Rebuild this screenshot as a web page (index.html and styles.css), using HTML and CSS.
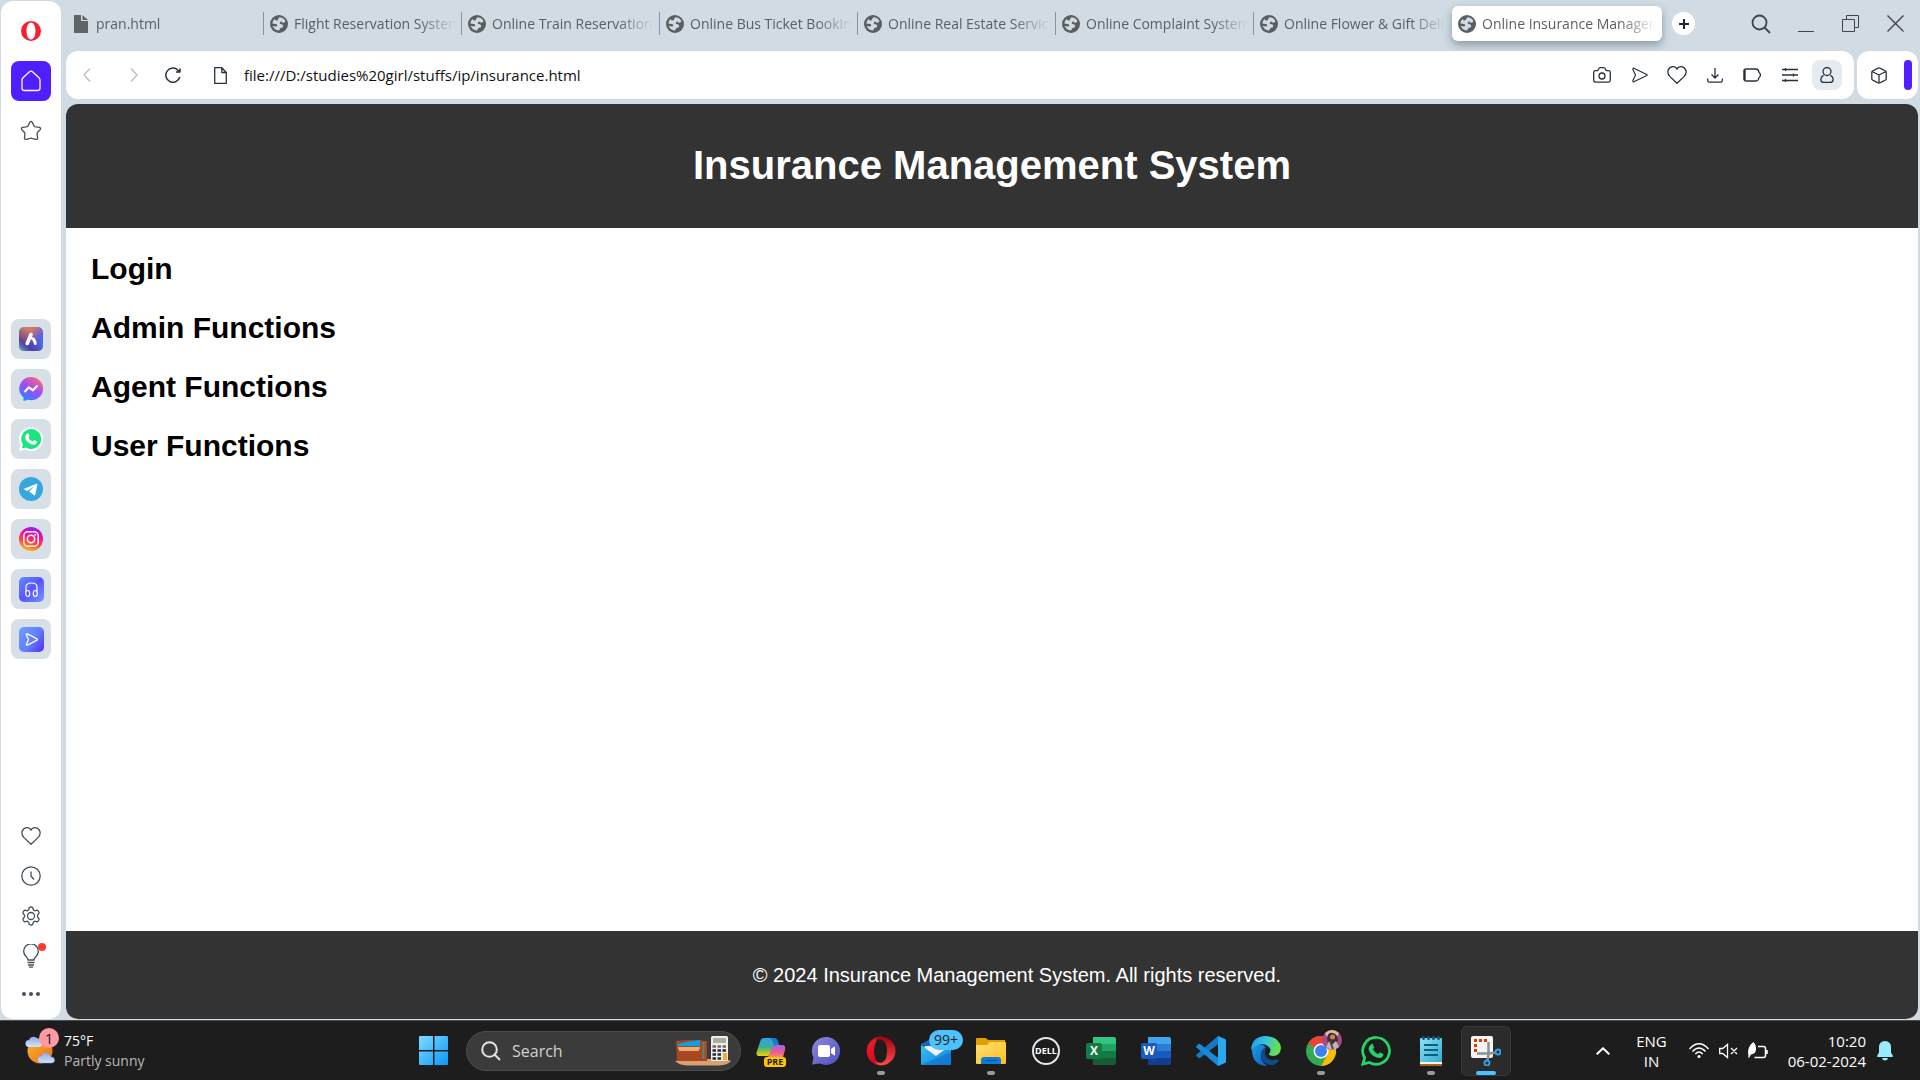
FILE: index.html
```html
<!DOCTYPE html>
<html lang="en">
<head>
<meta charset="utf-8">
<meta name="viewport" content="width=device-width, initial-scale=1">
<title>Online Insurance Management System</title>
<link rel="stylesheet" href="styles.css">
</head>
<body>
<svg class="sprite" aria-hidden="true">
  <defs>
    <linearGradient id="g-aria" x1="0" y1="0" x2="1" y2="1"><stop offset="0" stop-color="#c98a7c"/><stop offset=".3" stop-color="#d8795c"/><stop offset=".65" stop-color="#5560e8"/><stop offset="1" stop-color="#4a7cff"/></linearGradient>
    <linearGradient id="g-ariab" x1="0" y1="1" x2=".6" y2=".3"><stop offset="0" stop-color="#5bb8e0"/><stop offset=".4" stop-color="#4a3596" stop-opacity=".8"/><stop offset="1" stop-color="#4a3596" stop-opacity="0"/></linearGradient>
    <linearGradient id="g-msg" x1=".2" y1="1" x2=".8" y2="0"><stop offset="0" stop-color="#1a8dff"/><stop offset=".5" stop-color="#a04aff"/><stop offset="1" stop-color="#ff6a70"/></linearGradient>
    <linearGradient id="g-insta" x1=".3" y1="1" x2=".6" y2="0"><stop offset="0" stop-color="#ffc21a"/><stop offset=".35" stop-color="#ff4a3c"/><stop offset=".65" stop-color="#f50f9c"/><stop offset="1" stop-color="#9a18ff"/></linearGradient>
    <linearGradient id="g-blue" x1="0" y1="0" x2="1" y2="1"><stop offset="0" stop-color="#5e8cff"/><stop offset=".5" stop-color="#5a55ff"/><stop offset="1" stop-color="#7298ff"/></linearGradient>
    <linearGradient id="g-blue2" x1="0" y1=".3" x2="1" y2="1"><stop offset="0" stop-color="#6f95ff"/><stop offset=".5" stop-color="#5f7dff"/><stop offset="1" stop-color="#5526ff"/></linearGradient>
    <linearGradient id="g-win" x1="0" y1="0" x2="1" y2="1"><stop offset="0" stop-color="#7fdcff"/><stop offset="1" stop-color="#0a97ff"/></linearGradient>
    <linearGradient id="g-copa" x1="0" y1="0" x2="0" y2="1"><stop offset="0" stop-color="#2fa0f5"/><stop offset=".5" stop-color="#35b38c"/><stop offset="1" stop-color="#f5d000"/></linearGradient>
    <linearGradient id="g-copb" x1="0" y1="0" x2="0" y2="1"><stop offset="0" stop-color="#a066ea"/><stop offset=".6" stop-color="#ee5b97"/><stop offset="1" stop-color="#ff8a5c"/></linearGradient>
    <linearGradient id="g-chat" x1="0" y1="0" x2="1" y2="1"><stop offset="0" stop-color="#8f88d8"/><stop offset="1" stop-color="#4b50c4"/></linearGradient>
    <linearGradient id="g-opera" x1="0" y1="0" x2="1" y2="1"><stop offset="0" stop-color="#ff1b2d"/><stop offset="1" stop-color="#b00018"/></linearGradient>
    <linearGradient id="g-operab" x1="0" y1="0" x2="0" y2="1"><stop offset="0" stop-color="#a3000f"/><stop offset="1" stop-color="#ff4b4b"/></linearGradient>
    <linearGradient id="g-mail" x1="0" y1="0" x2="1" y2="1"><stop offset="0" stop-color="#35c0f5"/><stop offset="1" stop-color="#0f7fdc"/></linearGradient>
    <linearGradient id="g-fold" x1="0" y1="0" x2="1" y2="1"><stop offset="0" stop-color="#ffe07a"/><stop offset="1" stop-color="#ffbd1c"/></linearGradient>
    <linearGradient id="g-edge" x1="0" y1="0" x2="1" y2=".2"><stop offset="0" stop-color="#1e9de0"/><stop offset=".5" stop-color="#35c1e6"/><stop offset="1" stop-color="#68e04a"/></linearGradient>
    <linearGradient id="g-edgeb" x1="0" y1="0" x2="1" y2="1"><stop offset="0" stop-color="#1b9de2"/><stop offset="1" stop-color="#0a5fc2"/></linearGradient>
    <linearGradient id="g-note" x1="0" y1="0" x2="1" y2="1"><stop offset="0" stop-color="#8fe2f5"/><stop offset="1" stop-color="#35a9cc"/></linearGradient>
    <linearGradient id="g-sun" x1="0" y1="0" x2="1" y2="1"><stop offset="0" stop-color="#f8b832"/><stop offset="1" stop-color="#ee6a12"/></linearGradient>
    <linearGradient id="g-cloud" x1="0" y1="0" x2="0" y2="1"><stop offset="0" stop-color="#8ea8e6"/><stop offset="1" stop-color="#d4e4fb"/></linearGradient>
    <symbol id="globe" viewBox="0 0 18 18"><circle cx="9" cy="9" r="9" fill="#5b5f60"/><path class="globe-land" d="M10 2.300q4 .3 5.500 4.200-1.300 1.500-3 1-1 0-1.300-1.300-1.700.8-1.500 2 .3 1 2 1 1.700.300 1.500 2-.3 1.500-2 1.500-1.200.300-1.400 1.500-.3 1.300-2 1.200Q4 14.500 2.500 11l3.200.5q1.500 0 1.500-1.200T5.700 9L2.300 8.500Q2.500 6 4.500 4q1 1.800 2.200 1.500 1.500-.2 1.600-1.700Q8.700 2.500 10 2.300Z"/></symbol>
    <symbol id="heart" viewBox="0 0 20 20"><path d="M10 18.200 3 11.600C-1.500 7 2 1.600 6 1.600c2 0 3.400 1 4 2.600.6-1.600 2-2.600 4-2.600 4 0 7.500 5.400 3 10Z"/></symbol>
    <symbol id="send" viewBox="0 0 20 20"><path d="M3.200 2.600c-.8-.4-1.400.2-1.200 1l3 6.400-3 6.400c-.2.8.4 1.400 1.200 1L17.500 10.600q1-.6 0-1.200Z"/></symbol>
    <symbol id="opera-ring" viewBox="0 0 20 20"><path fill="#fa1e33" fill-rule="evenodd" d="M10 0a10 10 0 1 0 0 20 10 10 0 0 0 0-20Zm0 1.600c2.800 0 4.500 3.700 4.500 8.400s-1.700 8.400-4.500 8.400-4.500-3.700-4.500-8.400S7.200 1.600 10 1.600Z"/></symbol>
    <symbol id="phone" viewBox="0 0 24 24"><path d="M8.300 6.500c.5-.4 1-.3 1.300.3l.8 1.900c.2.500 0 .9-.9 1.900.9 1.800 2.200 3 4.200 3.900.9-1.100 1.300-1.500 1.800-1.300l2 1c.6.300.5.9.2 1.500-.9 2-3 2.200-5 1.500-3.500-1.200-5.500-3.500-6.400-5.800-.6-1.700.2-3.900 2-4.900Z"/></symbol>
  </defs>
</svg>

<div class="browser">
  <nav class="sidebar" aria-label="Sidebar">
    <button class="side-btn" aria-label="Menu"><svg width="20" height="20"><use href="#opera-ring"/></svg></button>
    <button class="side-btn home" aria-label="Home"><svg class="line" width="20" height="22" viewBox="0 0 20 22"><path d="m8.500 1.700-6 5.500Q1 8.500 1 10v8q0 2.500 2.500 2.500h13Q19 20.500 19 18v-8q0-1.500-1.500-2.800l-6-5.500q-1.500-1.200-3 0Z"/></svg></button>
    <button class="side-btn" aria-label="Bookmarks"><svg class="line" width="22" height="22" viewBox="0 0 22 22"><path d="M9.800 2.200q1.200-1.400 2.400 0l1.600 3.400q.6 1 1.700 1.200l4 .6q1.700.6.700 2.200l-2.500 2.700q-.8.900-.6 2l.5 3.800q-.2 1.800-2 1.200L12 18.400q-1-.4-2 0l-3.600.9q-1.800.6-2-1.200l.5-3.800q.2-1.100-.6-2L1.800 9.600q-1-1.600.7-2.200l4-.6q1.100-.2 1.700-1.200Z"/></svg></button>
    <div class="apps">
      <button class="app" aria-label="Aria"><svg width="24" height="24" viewBox="0 0 24 24"><rect width="24" height="24" rx="5" fill="url(#g-aria)"/><rect width="24" height="24" rx="5" fill="url(#g-ariab)"/><path d="M12 7.500 8.200 16.500" stroke="#fff" stroke-width="3.600" stroke-linecap="round"/><path d="M13.500 11.500q2.500 1.500 2.700 5" stroke="#fff" stroke-width="3" stroke-linecap="round" fill="none"/></svg></button>
      <button class="app" aria-label="Messenger"><svg width="24" height="24" viewBox="0 0 24 24"><path fill="url(#g-msg)" d="M12 0a12 11.600 0 1 1-3 22.800L4.500 24v-3.500A11.600 11.600 0 0 1 12 0Z"/><path d="m5.500 15 4.400-4.700 4.100 3 4.500-4.800" stroke="#fff" stroke-width="2.200" fill="none" stroke-linejoin="round"/></svg></button>
      <button class="app" aria-label="WhatsApp"><svg width="24" height="24" viewBox="0 0 24 24"><path fill="#fff" d="M12 0a12 12 0 1 1-5.500 22.600L0 24l1.500-6A12 12 0 0 1 12 0Z"/><path fill="#1be481" d="M12 2a10 10 0 1 1-5 18.600L2.800 21.500 4 17.600A10 10 0 0 1 12 2Z"/><use href="#phone" fill="#fff"/></svg></button>
      <button class="app" aria-label="Telegram"><svg width="24" height="24" viewBox="0 0 24 24"><circle cx="12" cy="12" r="12" fill="#37a7e0"/><path fill="#fff" d="m4.500 12 13-5.200c.7-.2 1 .1.900.9l-2.200 10c-.2.7-.6.900-1.200.5l-4.900-3.700 5-5-7 4.400Z"/></svg></button>
      <button class="app" aria-label="Instagram"><svg width="24" height="24" viewBox="0 0 24 24"><circle cx="12" cy="12" r="12" fill="url(#g-insta)"/><g fill="none" stroke="#fff" stroke-width="1.500"><rect x="4.800" y="4.800" width="14.400" height="14.400" rx="4"/><circle cx="12" cy="12" r="3.700"/></g><circle cx="16.200" cy="7.800" r="1" fill="#fff"/></svg></button>
      <button class="app" aria-label="Player"><svg width="25" height="25" viewBox="0 0 25 25"><rect width="25" height="25" rx="5" fill="url(#g-blue)"/><g fill="none" stroke="#fff" stroke-width="1.200"><path d="M7 14.500V10q0-4 5.500-4T18 10v4.500"/><ellipse cx="8.700" cy="16.500" rx="2" ry="3"/><ellipse cx="16.300" cy="16.500" rx="2" ry="3"/></g></svg></button>
      <button class="app" aria-label="Flow"><svg width="25" height="25" viewBox="0 0 25 25"><rect width="25" height="25" rx="5" fill="url(#g-blue2)"/><path fill="none" stroke="#fff" stroke-width="1.300" stroke-linejoin="round" d="M8.500 6.900q-1.700-.5-1 1.200l2 4.400-2 4.400q-.7 1.700 1 1.200l9.500-5q.8-.6 0-1.200Z"/></svg></button>
    </div>
    <div class="side-tools">
      <button class="side-tool" aria-label="Pinboards"><svg class="line" width="20" height="20"><use href="#heart"/></svg></button>
      <button class="side-tool" aria-label="History"><svg class="line" width="20" height="20" viewBox="0 0 20 20"><circle cx="10" cy="10" r="9.200"/><path d="M10 5.500V10l3 3.500"/></svg></button>
      <button class="side-tool" aria-label="Settings"><svg class="line" width="20" height="20" viewBox="0 0 20 20"><circle cx="10" cy="10" r="3.500"/><path d="M8.300 1.500q1.700-1 3.400 0l.6 2.400 1.500.9 2.400-.7q1.700.900 1.900 2.900l-1.600 2.100v1.800l1.600 2.100q-.2 2-1.900 2.900l-2.400-.7-1.500.9-.6 2.400q-1.700 1-3.400 0l-.6-2.400-1.500-.9-2.400.7Q2.100 15 1.900 13l1.600-2.100V9.100L1.900 7Q2.100 5 3.800 4.100l2.400.7 1.500-.9Z"/></svg></button>
      <button class="side-tool" aria-label="Tips"><svg class="line" width="20" height="24" viewBox="0 0 20 24"><path d="M7 16q0-1.500-1.500-3a7.300 7.300 0 1 1 9 0Q13 14.500 13 16ZM6.500 18.500h7M7 21h6M8 23.200h4"/></svg><span class="dot"></span></button>
      <button class="side-tool" aria-label="More"><svg width="18" height="4" viewBox="0 0 18 4" fill="#45505a"><circle cx="2" cy="2" r="2"/><circle cx="9" cy="2" r="2"/><circle cx="16" cy="2" r="2"/></svg></button>
    </div>
  </nav>

  <div class="window">
    <div class="tabstrip">
      <div class="tabs">
        <button class="tab"><svg width="18" height="18" viewBox="0 0 18 18" fill="#5f6566"><path d="M2 0h7v6h7v12H2ZM10.500 0 16 5h-5.500Z"/></svg><span>pran.html</span></button>
        <button class="tab"><svg width="18" height="18"><use href="#globe"/></svg><span>Flight Reservation System</span></button>
        <button class="tab"><svg width="18" height="18"><use href="#globe"/></svg><span>Online Train Reservation</span></button>
        <button class="tab"><svg width="18" height="18"><use href="#globe"/></svg><span>Online Bus Ticket Booking</span></button>
        <button class="tab"><svg width="18" height="18"><use href="#globe"/></svg><span>Online Real Estate Services</span></button>
        <button class="tab"><svg width="18" height="18"><use href="#globe"/></svg><span>Online Complaint System</span></button>
        <button class="tab"><svg width="18" height="18"><use href="#globe"/></svg><span>Online Flower &amp; Gift Delivery</span></button>
        <button class="tab active"><svg width="18" height="18"><use href="#globe"/></svg><span>Online Insurance Management</span></button>
        <button class="new-tab" aria-label="New tab"><svg width="10" height="10" viewBox="0 0 10 10"><path d="M5 0v10M0 5h10" stroke="#1c2733" stroke-width="2"/></svg></button>
      </div>
      <div class="controls">
        <button aria-label="Search tabs"><svg class="ctl" width="20" height="20" viewBox="0 0 20 20"><circle cx="8.500" cy="8.500" r="7" stroke-width="1.800"/><path d="m13.500 13.500 5.500 5.500" stroke-width="1.800"/></svg></button>
        <button aria-label="Minimize"><svg class="ctl" width="16" height="16" viewBox="0 0 16 16"><path d="M0 15.500h16"/></svg></button>
        <button aria-label="Restore"><svg class="ctl" width="17" height="17" viewBox="0 0 17 17"><path d="M.5 4.500h12v12H.5ZM4.500 4.500v-4h12v12h-4"/></svg></button>
        <button aria-label="Close"><svg class="ctl" width="17" height="17" viewBox="0 0 17 17"><path d="m.5.5 16 16m0-16-16 16" stroke-width="1.400"/></svg></button>
      </div>
    </div>

    <div class="toolbar">
      <div class="address">
        <button class="nav faded" aria-label="Back"><svg class="line" width="14" height="14" viewBox="0 0 14 14"><path d="M10 .5 4 7l6 6.500"/></svg></button>
        <button class="nav faded" aria-label="Forward"><svg class="line" width="14" height="14" viewBox="0 0 14 14"><path d="m4 .5 6 6.500-6 6.500"/></svg></button>
        <button class="nav" aria-label="Reload"><svg class="line" width="16" height="16" viewBox="0 0 16 16"><path d="M14.800 10A7.100 7.100 0 1 1 13 3.200l1.500 1.500M15 1.500V5h-4" stroke-width="1.500"/></svg></button>
        <svg class="line page-icon" width="13" height="17" viewBox="0 0 13 17"><path d="M.7.700h7.100l4.500 4.800v10.800H.7ZM7.800.7v4.800h4.500"/></svg>
        <input class="url" type="text" aria-label="Address" value="file:///D:/studies%20girl/stuffs/ip/insurance.html">
        <div class="actions">
          <button aria-label="Snapshot"><svg class="line" width="18" height="18" viewBox="0 0 18 18"><path d="M.7 6.500q0-1.800 1.800-1.800h1.700q.8 0 1-.8.500-2.200 2-2.200h3.600q1.500 0 2 2.200.2.800 1 .8h1.700q1.800 0 1.800 1.800v7.800q0 1.800-1.800 1.800h-13Q.7 16.100.7 14.300Z"/><circle cx="9" cy="10" r="3"/></svg></button>
          <button aria-label="My Flow"><svg class="line" width="18" height="18"><use href="#send"/></svg></button>
          <button aria-label="Add to bookmarks"><svg class="line" width="20" height="20"><use href="#heart"/></svg></button>
          <button aria-label="Downloads"><svg class="line" width="16" height="16" viewBox="0 0 16 16"><path d="M8 1v10M4.500 7.500 8 11l3.500-3.500M.7 11.500v2q0 1.700 1.700 1.700h11.200q1.700 0 1.700-1.700v-2"/></svg></button>
          <button aria-label="Battery saver"><svg class="line" width="18" height="14" viewBox="0 0 18 14"><path d="M3 1h10q2.500 0 3 3.500 1.500 1 1.500 2.500T16 9.500Q15.500 13 13 13H3Q1 13 1 11V3q0-2 2-2Z"/><path d="M1.700 2v10" stroke-width="2"/></svg></button>
          <button aria-label="Easy setup"><svg class="line" width="16" height="14" viewBox="0 0 16 14"><path d="M0 1.500h16M0 7h16M0 12.500h16M3.500 0v3M11.500 5.500v3M3.500 11v3"/></svg></button>
          <button class="profile" aria-label="Profile"><svg class="line" width="16" height="16" viewBox="0 0 16 16"><circle cx="8" cy="4.500" r="4"/><path d="M4.500 8.300Q2 9.500 1.800 12.500q0 3 3 3h6.400q3 0 3-3Q14 9.500 11.500 8.300"/></svg></button>
        </div>
      </div>
      <div class="extras">
        <button aria-label="Extensions"><svg class="line" width="16" height="17" viewBox="0 0 16 17"><path d="M8 .8q.5 0 6.500 3.200.7.500.7 1.200v6.600q0 .7-.7 1.200Q8.500 16.200 8 16.200T1.500 13q-.7-.5-.7-1.200V5.200q0-.7.7-1.200Q7.500.8 8 .8ZM1 4.500 8 8l7-3.500M8 8v8"/></svg></button>
        <span class="accent"></span>
      </div>
    </div>

    <div class="page">
      <header class="page-header"><h1>Insurance Management System</h1></header>
      <main class="page-main">
        <h2>Login</h2>
        <h2>Admin Functions</h2>
        <h2>Agent Functions</h2>
        <h2>User Functions</h2>
      </main>
      <footer class="page-footer"><p>© 2024 Insurance Management System. All rights reserved.</p></footer>
    </div>
  </div>
</div>

<div class="taskbar">
  <button class="weather">
    <span class="weather-icon"><svg width="30" height="30" viewBox="0 0 30 30"><circle cx="15" cy="15" r="12.500" fill="url(#g-sun)"/><path fill="url(#g-cloud)" d="M4 11a3.500 3.500 0 0 1 0-7Q6 0 10 1q4 1 4 4a3 3 0 0 1 0 6Z"/><path fill="url(#g-cloud)" stroke="#7d9be0" stroke-width=".5" d="M16 27a3.500 3.500 0 0 1 0-7Q18 16 22 17q3 1 4 4a3 3 0 0 1 1 6Z"/></svg><span class="count">1</span></span>
    <span class="weather-text"><span>75°F</span><span class="muted">Partly sunny</span></span>
  </button>

  <div class="task-center">
    <button class="task" aria-label="Start"><svg width="30" height="30" viewBox="0 0 30 30"><path fill="url(#g-win)" d="M1 0h13v14H0V1Q0 0 1 0ZM15.500 0H28q1 0 1 1v13H15.500ZM0 15.500h14v13.500H1q-1 0-1-1ZM15.500 15.500H29V28q0 1-1 1H15.500Z"/></svg></button>
    <label class="search">
      <svg width="20" height="20" viewBox="0 0 20 20" fill="none" stroke="#e4e4e4" stroke-width="2"><circle cx="8.500" cy="8.500" r="7.300"/><path d="m13.500 13.500 5 5" stroke-linecap="round"/></svg>
      <input type="text" placeholder="Search" aria-label="Search">
      <svg width="57" height="30" viewBox="0 0 57 30"><path fill="#d9a074" d="M0 25q16-2 34-2 20 0 22 2-3 4-12 4.500H12Q4 29 0 25Z"/><path fill="#a94720" d="M1 5q16-2 31 0v20H2Z"/><path fill="#0ba0ea" d="m2 8 10-2 13-2v6H3Z"/><path stroke="#e7ae78" stroke-width="2" d="M3 12h22M4 14h20"/><path stroke="#4c8a79" stroke-width="2" d="M28.500 6v17"/><rect x="36" y="0" width="17" height="25" rx="1.500" fill="#f2efe8"/><path fill="#a9aea0" d="M38 2h13v5H38Z"/><g stroke="#262a33" stroke-width="2.500" stroke-dasharray="3.500 1.500"><path d="M37.500 10.500H52" stroke="#755f70"/><path d="M37.500 14.500H52M37.500 18.500H47M37.500 22.500H47"/></g><path fill="#f0ad38" d="M48 17h4v7h-4Z"/></svg>
    </label>
    <button class="task" aria-label="Copilot"><svg width="30" height="30" viewBox="0 0 30 30"><path fill="url(#g-copa)" d="M8 2h10q3 0 4 4l1 3h-5l-3 8q-1 3-4 3H4q-5 0-3-5L4 6q1-4 4-4Z"/><path fill="url(#g-copb)" d="M20 9h6q4 0 3 5l-2 7H12l4-9q1-3 4-3Z"/><path fill="#1579d4" d="M14 2h5q2 0 3 4l1 3h-5q-1-5-4-7Z"/></svg><span class="pre">PRE</span></button>
    <button class="task" aria-label="Chat"><svg width="30" height="30" viewBox="0 0 30 30"><path fill="url(#g-chat)" d="M15 1a14 14 0 1 1-6 26.600L1 28.500l1.500-6.800A14 14 0 0 1 15 1Z"/><rect x="7" y="9" width="12" height="12" rx="2" fill="#fff"/><path fill="#fff" d="m20 13 3.500-2.500q.5 0 .5.500v8q0 .5-.5.500L20 17Z"/></svg></button>
    <button class="task running" aria-label="Opera"><svg width="30" height="30" viewBox="0 0 30 30"><path fill="url(#g-opera)" fill-rule="evenodd" d="M15 .5a14.500 14.500 0 1 0 9 26 14.500 14.500 0 0 1-9 2Q9 28 8 15 9 2 15 2Z"/><path fill="url(#g-operab)" d="M15 .7a14.500 14.300 0 0 1 0 28.600q-4 0-6-4 8 4 11-3 2-7 0-14-3-7-11-4 2-3.600 6-3.600Z"/><ellipse cx="14.500" cy="15" rx="5.700" ry="11" fill="#1d1d1d"/></svg></button>
    <button class="task" aria-label="Mail"><svg width="30" height="30" viewBox="0 0 30 30"><path fill="#1466b8" d="M0 8 15 0l15 8v8H0Z"/><path fill="#f1f1f1" d="M4 10h22v5l-11 8L3 12Z"/><path fill="url(#g-mail)" d="m0 9 15 11L30 9v20H0Z"/><path fill="#0d67c5" opacity=".5" d="m0 29 30-13v13Z"/></svg><span class="badge">99+</span></button>
    <button class="task running" aria-label="File Explorer"><svg width="30" height="30" viewBox="0 0 30 30"><path fill="#dfa000" d="M1 2h8q2 0 3 2h17v10H0V3q0-1 1-1Z"/><path fill="url(#g-fold)" d="M0 9h11l3-3h15q1 0 1 1v20q0 1-1 1H1q-1 0-1-1Z"/><path fill="#0f7ad1" d="M8 21h14q3 0 3 3v4H5v-4q0-3 3-3Z"/><path stroke="#0754a0" d="M9 24.500h12"/></svg></button>
    <button class="task dell" aria-label="Dell"><span>DELL</span></button>
    <button class="task" aria-label="Excel"><span class="office excel"><b>X</b></span></button>
    <button class="task" aria-label="Word"><span class="office word"><b>W</b></span></button>
    <button class="task" aria-label="Visual Studio Code"><svg width="30" height="30" viewBox="0 0 30 30"><path fill="#1579c0" d="m22 0 3 6L4 22q-1 .5-1.500 0l-2-2q-.5-1 0-1.500Z"/><path fill="#1b8ad6" d="m22 30 3-6L4 8q-1-.5-1.500 0l-2 2q-.5 1 0 1.500Z"/><path fill="#2aa9f2" d="m22 0 7 3q1 .5 1 1.500v21q0 1-1 1.500l-7 3Z"/></svg></button>
    <button class="task" aria-label="Edge"><svg width="30" height="30" viewBox="0 0 30 30"><path fill="url(#g-edgeb)" d="M1 11Q0 30 17 30 9 26 10 18q1-5 5-7Q8 5 1 11Z"/><path fill="#0c4c94" d="M10 17q0 12 12 12 4-1 6-5-1-1-5 0-7 1-9-6-.5-4 1.500-6.500-5 1-5.500 5.500Z"/><path fill="url(#g-edge)" d="M0 14Q1 0 15 0q14 1 15 12-1 8-8 8-5-.5-4-2 3-4 0-7Q10 4 0 14Z"/></svg></button>
    <button class="task running" aria-label="Chrome"><svg width="30" height="30" viewBox="0 0 30 30"><circle cx="15" cy="15" r="15" fill="#34a853"/><path fill="#ea4335" d="M15 15 2 7.500a15 15 0 0 1 26 0Z"/><path fill="#fbbc04" d="M15 15V7.500h13A15 15 0 0 1 15 30l6.500-11.300Z"/><circle cx="15" cy="15" r="7.500" fill="#fff"/><circle cx="15" cy="15" r="6" fill="#3f7ff0"/></svg><svg class="avatar" width="20" height="20" viewBox="0 0 20 20"><circle cx="10" cy="10" r="10" fill="#a64a89"/><path fill="#e4b9a5" d="M3 3q7-6 14 0l-2 4H5Z"/><path fill="#42302c" d="M5 8q1-6 6-5 5 1 5 8l-3 3H6Z"/><circle cx="10.500" cy="7" r="2.500" fill="#c18765"/><path fill="#b9b7c3" d="m4 17 3-6 3 4 4-4 3 6q-6 5-13 0Z"/><path stroke="#59414b" stroke-width="2" d="m8 11 3 8"/></svg></button>
    <button class="task" aria-label="WhatsApp"><svg width="30" height="30" viewBox="0 0 24 24"><path fill="none" stroke="#25d366" stroke-width="2.200" d="M12.200 1.200a10.700 10.700 0 1 1-5.400 20L1.500 22.500l1.400-5.100A10.700 10.700 0 0 1 12.200 1.200Z"/><use href="#phone" fill="#25d366"/></svg></button>
    <button class="task running" aria-label="Notepad"><svg width="22" height="30" viewBox="0 0 22 30"><path fill="#b45f16" d="M0 26h22v4H0Z"/><path fill="#f3f6f7" d="M0 24h22v4H0Z"/><path fill="url(#g-note)" d="M1 2h20q1 0 1 1v23H0V3q0-1 1-1Z"/><path stroke="#09617f" stroke-width="2" d="M4 9h14M4 14h14M4 19h14"/><path stroke="#0b5f7d" stroke-width="3" stroke-linecap="round" d="M3.500 1.500v1M8.500 1.500v1M13.500 1.500v1M18.500 1.500v1"/></svg></button>
    <button class="task current" aria-label="Snipping Tool"><svg width="30" height="30" viewBox="0 0 30 30"><rect width="22" height="22" rx="2" fill="#f5f5f5"/><path fill="none" stroke="#d83b01" stroke-width="3" stroke-dasharray="3 2" d="M4.500 16V4.500H18"/><path fill="none" stroke="#8b9198" stroke-width="2.500" d="M17.500 6v13l-1 5M6 17.500h13l5-1"/><g fill="none" stroke="#2f9fe4" stroke-width="2"><circle cx="27" cy="16" r="2.500"/><circle cx="16" cy="27" r="2.500"/></g></svg></button>
  </div>

  <div class="tray">
    <button aria-label="Show hidden icons"><svg width="14" height="8" viewBox="0 0 14 8" fill="none" stroke="#fff" stroke-width="2"><path d="m.7 7.300 6.300-6 6.300 6"/></svg></button>
    <button class="lang"><span>ENG</span><span>IN</span></button>
    <button class="status" aria-label="Network, sound and battery">
      <svg width="20" height="16" viewBox="0 0 20 16" fill="none" stroke="#fff" stroke-width="1.400"><path d="M.5 6Q10-4.500 19.500 6M3.500 8.500q6.500-7 13 0M6.300 11q3.700-4 7.400 0"/><circle cx="10" cy="13.500" r="1.500" fill="#fff" stroke="none"/></svg>
      <svg width="19" height="16" viewBox="0 0 19 16" fill="none" stroke="#fff" stroke-width="1.300"><path d="M.7 5.500h3L8.500 1.500v13l-4.800-4h-3ZM12 5l6 6m0-6-6 6"/></svg>
      <svg width="20" height="18" viewBox="0 0 20 18" fill="none" stroke="#fff" stroke-width="1.500"><path d="M10 4.500h5.500q2 0 2 2v7q0 2-2 2H6.500M19 8v4"/><path fill="#fff" stroke="none" d="M5.500 0q3 3 2.500 7.500Q7.500 12 3 12.500L1 16q-1 0-.5-2.500Q-1.500 5 5.500 0Z"/></svg>
    </button>
    <button class="clock"><span>10:20</span><span>06-02-2024</span></button>
    <button aria-label="Notifications"><svg width="16" height="20" viewBox="0 0 16 20" fill="#99ebff"><path d="M8 0q6 0 6 6.500v5l2 3.500q0 1-1 1H1q-1 0-1-1l2-3.500v-5Q2 0 8 0ZM5 17h6q-.5 2.500-3 2.500T5 17Z"/></svg></button>
  </div>
</div>
</body>
</html>
```
FILE: styles.css
```css
* { box-sizing: border-box; }

body {
  margin: 0;
  min-height: 100vh;
  display: flex;
  flex-direction: column;
  background: #d0dbe4;
  font-family: "Open Sans", "Noto Sans", sans-serif;
  font-size: 14px;
}

button {
  margin: 0;
  padding: 0;
  border: 0;
  background: none;
  font: inherit;
  color: inherit;
  display: flex;
  align-items: center;
  justify-content: center;
}

svg { display: block; flex: none; }

.sprite { position: absolute; width: 0; height: 0; }

.line {
  fill: none;
  stroke: currentColor;
  stroke-width: 1.3;
  stroke-linejoin: round;
}

/* Browser frame */
.browser {
  flex: 1;
  display: flex;
  gap: 5px;
  padding: 0 2px 1px 1px;
}

/* Sidebar */
.sidebar {
  flex: none;
  width: 60px;
  margin-top: 1px;
  padding: 10px 0 7px;
  border-radius: 12px;
  background: #fff;
  color: #45505a;
  display: flex;
  flex-direction: column;
  align-items: center;
  gap: 10px;
}

.side-btn { width: 40px; height: 40px; border-radius: 8px; }
.home { background: #4f1fff; color: #fff; }

.apps {
  margin-top: 158px;
  display: flex;
  flex-direction: column;
  gap: 10px;
}

.app {
  width: 40px;
  height: 40px;
  border-radius: 8px;
  background: #d6e0e6;
}

.side-tools {
  margin-top: auto;
  display: flex;
  flex-direction: column;
}

.side-tool { position: relative; width: 40px; height: 40px; }
.side-tool:last-child { height: 36px; }

.dot {
  position: absolute;
  top: 7px;
  right: 5px;
  width: 8px;
  height: 8px;
  border-radius: 50%;
  background: #ff3b30;
}

.window {
  flex: 1;
  min-width: 0;
  display: flex;
  flex-direction: column;
}

/* Tabs */
.tabstrip {
  height: 51px;
  display: flex;
  padding: 6px 0 10px;
}

.tabs { flex: 1; display: flex; align-items: center; min-width: 0; }

.tab {
  flex: 0 1 198px;
  min-width: 0;
  height: 35px;
  padding: 0 6px;
  gap: 6px;
  justify-content: flex-start;
  color: #5b5f60;
  background: linear-gradient(#8d9499, #8d9499) right center / 1px 23px no-repeat;
}

.tab:nth-child(7), .tab.active { background-image: none; }

.tab span {
  flex: 1;
  overflow: hidden;
  white-space: nowrap;
  text-align: left;
  mask-image: linear-gradient(to right, #000 calc(100% - 36px), transparent);
}

.tab.active {
  flex-basis: 210px;
  border-radius: 6px;
  background-color: #fff;
  box-shadow: 0 4px 8px rgba(60, 75, 85, 0.45);
}

.globe-land { fill: #d0dbe4; }

.new-tab {
  flex: none;
  width: 23px;
  height: 23px;
  margin-left: 10px;
  border-radius: 50%;
  background: #fff;
}

.controls { flex: none; display: flex; align-items: center; }
.controls button { width: 45px; height: 35px; }
.ctl { fill: none; stroke: #444; stroke-width: 1; }

/* Toolbar */
.toolbar { display: flex; gap: 3px; color: #28323c; }

.address {
  flex: 1;
  min-width: 0;
  height: 48px;
  padding: 0 12px 0 6px;
  border-radius: 12px;
  background: #fff;
  display: flex;
  align-items: center;
}

.nav { width: 30px; height: 30px; margin-right: 17px; }
.nav:nth-child(3) { margin-right: 10px; margin-left: -8px; }
.faded { color: #b9bec2; }
.page-icon { margin: 0 13px 0 16px; }

.url {
  flex: 1;
  min-width: 0;
  border: 0;
  padding: 0 4px;
  outline: 0;
  background: none;
  font: 15px "Open Sans", "Noto Sans", sans-serif;
  color: #111;
}

.actions {
  flex: none;
  width: 255px;
  display: flex;
  align-items: center;
  justify-content: space-between;
}

.actions button { width: 30px; height: 30px; }
.actions .profile { border-radius: 8px; background: #e6ebef; }

.extras {
  flex: none;
  border-radius: 12px;
  background: #fff;
  padding: 0 6px 0 7px;
  display: flex;
  align-items: center;
  gap: 10px;
}

.extras button { width: 30px; height: 30px; }
.accent { width: 8px; height: 30px; border-radius: 4px; background: #4f1fff; }

/* Web page */
.page {
  flex: 1;
  margin-top: 5px;
  border-radius: 12px;
  overflow: hidden;
  background: #fff;
  color: #000;
  font: 20px/24px "Liberation Sans", Arial, sans-serif;
  display: flex;
  flex-direction: column;
}

.page-header {
  padding: 38px 12px 40px;
  background: #333;
  color: #fff;
  text-align: center;
}

.page-header h1 { margin: 0; font-size: 40px; line-height: 46px; }

.page-main {
  flex: 1;
  padding: 24px 25px;
  display: flex;
  flex-direction: column;
  gap: 25px;
}

.page-main h2 { margin: 0; font-size: 30px; line-height: 34px; }

.page-footer {
  padding: 32px 0 32px 50px;
  background: #333;
  color: #fff;
  text-align: center;
}

.page-footer p { margin: 0; }

/* Taskbar */
.taskbar {
  height: 60px;
  border-top: 1px solid #465058;
  background: #1d1d1d;
  color: #fff;
  font-size: 15px;
  line-height: 20px;
  display: grid;
  grid-template-columns: 1fr auto 1fr;
  align-items: center;
}

.weather { justify-self: start; gap: 9px; padding-left: 25px; }
.weather-icon { position: relative; }

.count {
  position: absolute;
  top: -8px;
  right: -4px;
  width: 20px;
  height: 20px;
  border-radius: 50%;
  background: #ff99a4;
  color: #1d1d1d;
}

.weather-text { display: flex; flex-direction: column; text-align: left; font-size: 14px; }
.muted { color: #b8b8b8; }

.task-center { display: flex; align-items: center; gap: 5px; }

.task {
  position: relative;
  width: 50px;
  height: 50px;
  border-radius: 6px;
}

.search {
  width: 275px;
  height: 40px;
  margin-left: 2px;
  padding: 0 8px 0 14px;
  border: 1px solid #4c4c4c;
  border-radius: 20px;
  background: #3b3b3b;
  display: flex;
  align-items: center;
}

.search input {
  flex: 1;
  min-width: 0;
  padding: 0 11px;
  border: 0;
  outline: 0;
  background: none;
  font: 16px "Open Sans", "Noto Sans", sans-serif;
  color: #d0d0d0;
}

.search input::placeholder { color: #d0d0d0; opacity: 1; }

.running::after, .current::after {
  content: "";
  position: absolute;
  bottom: 1px;
  left: 21px;
  width: 8px;
  height: 4px;
  border-radius: 2px;
  background: #9a9a9a;
}

.current { background: #2b2b2b; border: 1px solid #373737; }
.current::after { left: 14px; bottom: 0; width: 20px; background: #4cc2ff; }

.pre {
  position: absolute;
  right: 10px;
  bottom: 9px;
  width: 22px;
  border-radius: 3px;
  background: #ffc700;
  color: #1d1d1d;
  font-size: 9px;
  font-weight: 700;
  line-height: 10px;
}

.badge {
  position: absolute;
  top: 4px;
  left: 18px;
  width: 34px;
  border-radius: 10px;
  background: #4cc2ff;
  color: #1d1d1d;
  font-size: 14px;
}

.avatar { position: absolute; top: 4px; right: 4px; }

.dell span {
  width: 28px;
  height: 28px;
  border: 2px solid #e6e6e6;
  border-radius: 50%;
  font-size: 9px;
  font-weight: 700;
  line-height: 24px;
}

.office {
  width: 30px;
  height: 28px;
  display: flex;
  align-items: center;
  border-radius: 2px;
}

.office b {
  width: 16px;
  height: 16px;
  border-radius: 2px;
  font-size: 12px;
  line-height: 16px;
}

.excel { background: linear-gradient(#33c481 25%, #21a366 25% 50%, #107c41 50% 75%, #185c37 75%) right / 23px 100% no-repeat; }
.excel b { background: #107c41; }
.word { background: linear-gradient(#41a5ee 25%, #2b7cd3 25% 50%, #185abd 50% 75%, #103f91 75%) right / 23px 100% no-repeat; }
.word b { background: #185abd; }

.tray {
  justify-self: end;
  display: flex;
  align-items: center;
  padding-right: 27px;
}

.lang { flex-direction: column; margin: 0 22px 0 26px; }
.status { gap: 10px; }
.clock { flex-direction: column; align-items: flex-end; margin: 0 11px 0 20px; }
```
